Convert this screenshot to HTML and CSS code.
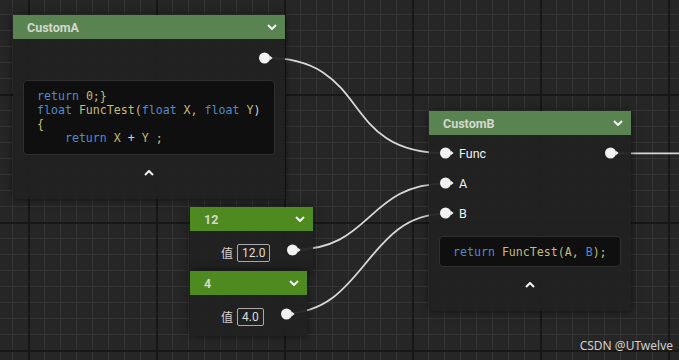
FILE: index.html
```html
<!DOCTYPE html>
<html lang="en">

<head>
  <meta charset="UTF-8">
  <title>Custom Nodes</title>

  <link rel="stylesheet" href="styles.css">
</head>

<body>
  <div class="graph">
    <!-- wires sit under the nodes -->
    <svg class="wires" width="679" height="360" viewBox="0 0 679 360">
      <path d="M264,57.7 C374,57.7 336,153.3 446,153.3" />
      <path d="M293,250 C373,250 366,183.7 446,183.7" />
      <path d="M285,313.3 C365,313.3 366,213.7 446,213.7" />
      <path d="M610,153.3 L679,153.3" />
    </svg>

    <div class="node node-a">
      <div class="head">
        <span class="title">CustomA</span>
        <svg class="chev" width="10" height="6" viewBox="0 0 10 6"><polyline points="1,1 5,5 9,1" /></svg>
      </div>
      <div class="body">
        <div class="out-row">
          <svg class="pin" width="14" height="12" viewBox="0 0 14 12"><circle cx="5.5" cy="6" r="5.5" /><polygon points="10.5,3.6 13.6,6 10.5,8.4" /></svg>
        </div>
        <pre class="code"><span class="kw">return</span> <span class="id">0;}</span>
<span class="kw">float</span> <span class="id">FuncTest(</span><span class="kw">float</span><span class="id"> X,</span> <span class="kw">float</span><span class="id"> Y</span>)
<span class="id">{</span>
    <span class="kw">return</span><span class="id"> X</span> + <span class="id">Y ;</span></pre>
        <div class="foot">
          <svg class="chev" width="10" height="6" viewBox="0 0 10 6"><polyline points="1,5 5,1 9,5" /></svg>
        </div>
      </div>
    </div>

    <div class="node node-b">
      <div class="head">
        <span class="title">CustomB</span>
        <svg class="chev" width="10" height="6" viewBox="0 0 10 6"><polyline points="1,1 5,5 9,1" /></svg>
      </div>
      <div class="body">
        <div class="row">
          <svg class="pin" width="14" height="12" viewBox="0 0 14 12"><circle cx="5.5" cy="6" r="5.5" /><polygon points="10.5,3.6 13.6,6 10.5,8.4" /></svg>
          <span class="label">Func</span>
          <svg class="pin pin-out" width="14" height="12" viewBox="0 0 14 12"><circle cx="5.5" cy="6" r="5.5" /><polygon points="10.5,3.6 13.6,6 10.5,8.4" /></svg>
        </div>
        <div class="row">
          <svg class="pin" width="14" height="12" viewBox="0 0 14 12"><circle cx="5.5" cy="6" r="5.5" /><polygon points="10.5,3.6 13.6,6 10.5,8.4" /></svg>
          <span class="label">A</span>
        </div>
        <div class="row">
          <svg class="pin" width="14" height="12" viewBox="0 0 14 12"><circle cx="5.5" cy="6" r="5.5" /><polygon points="10.5,3.6 13.6,6 10.5,8.4" /></svg>
          <span class="label">B</span>
        </div>
        <pre class="code code-one"><span class="kw">return</span> <span class="id">FuncTest(A,</span> <span class="kw">B</span><span class="id">);</span></pre>
        <div class="foot">
          <svg class="chev" width="10" height="6" viewBox="0 0 10 6"><polyline points="1,5 5,1 9,5" /></svg>
        </div>
      </div>
    </div>

    <div class="node const node-12">
      <div class="head">
        <span class="title">12</span>
        <svg class="chev" width="10" height="6" viewBox="0 0 10 6"><polyline points="1,1 5,5 9,1" /></svg>
      </div>
      <div class="body">
        <span class="val-label">值</span>
        <span class="val-box">12.0</span>
        <svg class="pin" width="14" height="12" viewBox="0 0 14 12"><circle cx="5.5" cy="6" r="5.5" /><polygon points="10.5,3.6 13.6,6 10.5,8.4" /></svg>
      </div>
    </div>

    <div class="node const node-4">
      <div class="head">
        <span class="title">4</span>
        <svg class="chev" width="10" height="6" viewBox="0 0 10 6"><polyline points="1,1 5,5 9,1" /></svg>
      </div>
      <div class="body">
        <span class="val-label">值</span>
        <span class="val-box">4.0</span>
        <svg class="pin" width="14" height="12" viewBox="0 0 14 12"><circle cx="5.5" cy="6" r="5.5" /><polygon points="10.5,3.6 13.6,6 10.5,8.4" /></svg>
      </div>
    </div>

    <div class="mark">CSDN @UTwelve</div>
  </div>
</body>

</html>
```

FILE: styles.css
```css
html,
body {
  margin: 0;
  background: #262626;
}

.graph {
  position: relative;
  width: 679px;
  height: 360px;
  overflow: hidden;
  font-family: Roboto, "Noto Sans", sans-serif;
  background-color: #262626;
  background-image:
    repeating-linear-gradient(90deg, transparent 0 28px, #171717 28px 30px, transparent 30px 128px),
    repeating-linear-gradient(180deg, transparent 0 94px, #171717 94px 96px, transparent 96px 128px),
    repeating-linear-gradient(90deg, transparent 0 12px, #343434 12px 13px, transparent 13px 16px),
    repeating-linear-gradient(180deg, transparent 0 14px, #343434 14px 15px, transparent 15px 16px);
}

.wires {
  position: absolute;
  left: 0;
  top: 0;
}

.wires path {
  fill: none;
  stroke: #d8d8d8;
  stroke-width: 1.8;
}

.node {
  position: absolute;
  background: rgba(33, 33, 33, 0.94);
  box-shadow: 0 0 8px rgba(0, 0, 0, 0.55);
}

.node-a {
  left: 13px;
  top: 15px;
  width: 272px;
}

.node-b {
  left: 429px;
  top: 111px;
  width: 202px;
}

.node-12 {
  left: 190px;
  top: 207px;
}

.node-4 {
  left: 190px;
  top: 271px;
}

.head {
  height: 24px;
  display: flex;
  align-items: center;
  justify-content: space-between;
  padding: 0 8px 0 14px;
  background: #5a8352;
}

.const .head {
  background: #4f8a20;
}

.title {
  font-size: 12.5px;
  font-weight: 700;
  color: #d2d9cf;
}

.chev {
  display: block;
  fill: none;
  stroke: #f4f4f4;
  stroke-width: 2;
}

.pin {
  display: block;
  flex: none;
  fill: #f2f2f2;
}

.node-a .body {
  padding: 9px 10px 0;
}

.out-row {
  height: 20px;
  display: flex;
  align-items: center;
  justify-content: flex-end;
  padding-right: 2px;
}

.code {
  margin: 12px 0 0;
  padding: 8px 13px 9px;
  background: #0f0f0f;
  border: 1px solid #2f2f2f;
  border-radius: 4px;
  font-family: "DejaVu Sans Mono", monospace;
  font-size: 11.6px;
  line-height: 14px;
  color: #d4d4d4;
  white-space: pre;
}

.kw {
  color: #4c8cca;
}

.id {
  color: #c8bb72;
}

.foot {
  height: 29px;
}

.foot .chev {
  margin: 15px auto 0;
}

.node-b .body {
  padding: 3px 10px 0;
}

.row {
  height: 30px;
  display: flex;
  align-items: center;
  padding-left: 1px;
}

.label {
  margin-left: 5px;
  font-size: 12.5px;
  color: #f2f2f2;
}

.pin-out {
  margin-left: auto;
  margin-right: 2px;
}

.code-one {
  margin-top: 8px;
  padding: 8px 13px 7px;
}

.const .body {
  display: flex;
  align-items: center;
  padding: 13px 12px 10px 31px;
}

.val-label {
  margin-right: 4px;
  font-family: "Noto Sans CJK SC", sans-serif;
  font-size: 12px;
  line-height: 18px;
  color: #d2d2d2;
}

.val-box {
  box-sizing: border-box;
  height: 18px;
  padding: 0 4px;
  border: 1px solid #a9a9a9;
  border-radius: 2px;
  font-size: 12px;
  line-height: 16px;
  color: #dddddd;
}

.const .pin {
  margin-left: 17px;
  margin-bottom: 6px;
}

.mark {
  position: absolute;
  right: 6px;
  bottom: 6px;
  font-family: "Noto Sans", sans-serif;
  font-size: 12px;
  color: #cfcfcf;
}
```
